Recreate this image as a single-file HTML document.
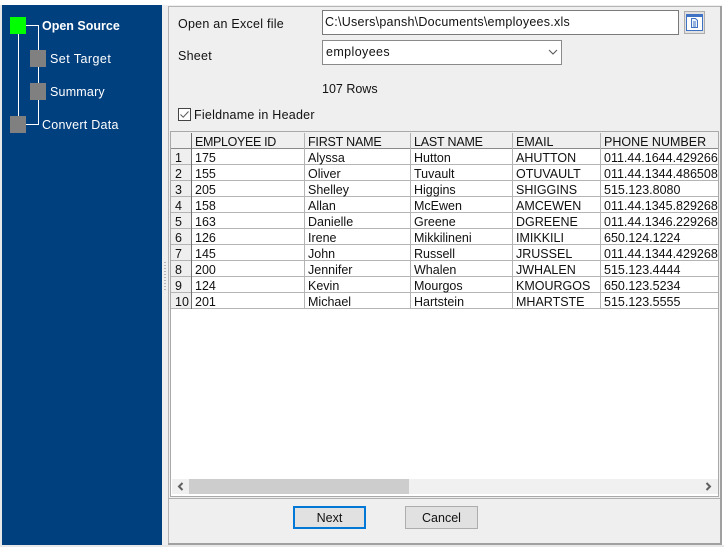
<!DOCTYPE html>
<html><head><meta charset="utf-8">
<style>
html,body{margin:0;padding:0;background:#fff;}
#p{position:relative;width:724px;height:547px;overflow:hidden;background:#fff;font-family:"Liberation Sans","Noto Sans CJK SC",sans-serif;font-size:12.5px;color:#111;}
#p div{position:absolute;box-sizing:border-box;}
.t{white-space:nowrap;line-height:16px;height:16px;}
.w{color:#fff;}
.l{letter-spacing:.25px;}
.sq{background:#808080;width:16px;height:17px;}
.ln{background:#fff;}
.h{background:#b4b4b4;height:1px;}
.v{background:#b4b4b4;width:1px;}
</style></head><body><div id="p">
<div style="left:0;top:545px;width:724px;height:2px;background:#e8e8e8"></div>
<div style="left:0;top:5px;width:2px;height:540px;background:#e8e8e8"></div>
<div style="left:2px;top:5px;width:160px;height:540px;background:#01407f"></div>
<div style="left:162px;top:5px;width:560px;height:540px;background:#efefef"></div>
<div style="left:168px;top:6px;width:554px;height:1px;background:#b5b5b5"></div>
<div style="left:168px;top:6px;width:1px;height:538px;background:#b5b5b5"></div>
<div style="left:720px;top:6px;width:2px;height:538px;background:#a0a0a0"></div>
<div style="left:168px;top:543px;width:554px;height:2px;background:#a0a0a0"></div>
<div style="left:168px;top:498px;width:552px;height:1px;background:#b0b0b0"></div>
<div style="left:164px;top:262px;width:2px;height:30px;background:repeating-linear-gradient(#b5b5b5 0 1px,#efefef 1px 3px)"></div>

<div class="ln" style="left:18px;top:34px;width:1px;height:82px"></div>
<div class="ln" style="left:26px;top:25px;width:13px;height:1px"></div>
<div class="ln" style="left:38px;top:25px;width:1px;height:100px"></div>
<div class="ln" style="left:26px;top:124px;width:13px;height:1px"></div>
<div style="left:10px;top:17px;width:16px;height:17px;background:#00ff00"></div>
<div class="sq" style="left:30px;top:50px"></div>
<div class="sq" style="left:30px;top:83px"></div>
<div class="sq" style="left:10px;top:116px"></div>
<div class="t w" style="left:42px;top:18px;font-weight:bold">Open Source</div>
<div class="t w l" style="left:50px;top:51px;letter-spacing:.45px">Set Target</div>
<div class="t w l" style="left:50px;top:84px;letter-spacing:.2px">Summary</div>
<div class="t w l" style="left:42px;top:117px">Convert Data</div>

<div class="t l" style="left:178px;top:16px">Open an Excel file</div>
<div class="t l" style="left:178px;top:48px">Sheet</div>
<div style="left:322px;top:10px;width:357px;height:25px;background:#fff;border:1px solid #7a7a7a"></div>
<div class="t l" style="left:325px;top:14px">C:\Users\pansh\Documents\employees.xls</div>
<div style="left:684px;top:11px;width:21px;height:23px;background:#e1e1e1;border:1px solid #adadad"></div>
<svg style="position:absolute;left:686px;top:14px" width="17" height="17" viewBox="0 0 17 17">
<rect x=".5" y=".5" width="16" height="16" fill="#fff" stroke="#3f72c4"/><rect x="0" y="0" width="17" height="3" fill="#3f72c4"/>
<path d="M5.500 4.500h4l2 2v7h-6z" fill="#eef4fb" stroke="#3f72c4"/><path d="M7 8h3M7 10h3M7 12h3" stroke="#3f72c4"/></svg>
<div style="left:322px;top:40px;width:240px;height:25px;background:#fff;border:1px solid #8a8a8a"></div>
<div class="t l" style="left:326px;top:44px;letter-spacing:.4px">employees</div>
<svg style="position:absolute;left:548px;top:49px" width="10" height="7" viewBox="0 0 10 7"><path d="M1 1l4 4 4-4" fill="none" stroke="#555"/></svg>
<div class="t" style="left:322px;top:81px">107 Rows</div>
<div style="left:178px;top:108px;width:13px;height:13px;background:#fff;border:1px solid #444"></div>
<svg style="position:absolute;left:179px;top:109px" width="11" height="11" viewBox="0 0 11 11"><path d="M1.500 5.500l2.700 2.700L9.500 2.500" fill="none" stroke="#555"/></svg>
<div class="t l" style="left:194px;top:107px">Fieldname in Header</div>

<div style="left:170px;top:131px;width:549px;height:366px;background:#fff;border:1px solid #a9a9a9"></div>
<div style="left:171px;top:132px;width:547px;height:16px;background:#efefef"></div>
<div style="left:171px;top:149px;width:20px;height:160px;background:#efefef"></div>
<div class="h" style="left:171px;top:148px;width:547px;background:#8a8a8a"></div>
<div class="h" style="left:171px;top:164px;width:547px"></div>
<div class="h" style="left:171px;top:180px;width:547px"></div>
<div class="h" style="left:171px;top:196px;width:547px"></div>
<div class="h" style="left:171px;top:212px;width:547px"></div>
<div class="h" style="left:171px;top:228px;width:547px"></div>
<div class="h" style="left:171px;top:244px;width:547px"></div>
<div class="h" style="left:171px;top:260px;width:547px"></div>
<div class="h" style="left:171px;top:276px;width:547px"></div>
<div class="h" style="left:171px;top:292px;width:547px"></div>
<div class="h" style="left:171px;top:308px;width:547px"></div>
<div class="v" style="left:191px;top:133px;height:176px;background:#707070"></div>
<div class="v" style="left:304px;top:133px;height:176px"></div>
<div class="v" style="left:410px;top:133px;height:176px"></div>
<div class="v" style="left:512px;top:133px;height:176px"></div>
<div class="v" style="left:600px;top:133px;height:176px"></div>

<div class="t" style="left:195px;top:134px;letter-spacing:-.35px">EMPLOYEE ID</div>
<div class="t" style="left:308px;top:134px;letter-spacing:-.2px">FIRST NAME</div>
<div class="t" style="left:414px;top:134px;letter-spacing:-.2px">LAST NAME</div>
<div class="t" style="left:516px;top:134px">EMAIL</div>
<div class="t" style="left:604px;top:134px">PHONE NUMBER</div>

<div class="t" style="left:175px;top:150px">1</div><div class="t" style="left:195px;top:150px">175</div><div class="t" style="left:308px;top:150px">Alyssa</div><div class="t" style="left:414px;top:150px">Hutton</div><div class="t" style="left:516px;top:150px">AHUTTON</div><div class="t" style="left:604px;top:150px;width:114px;overflow:hidden">011.44.1644.429266</div>
<div class="t" style="left:175px;top:166px">2</div><div class="t" style="left:195px;top:166px">155</div><div class="t" style="left:308px;top:166px">Oliver</div><div class="t" style="left:414px;top:166px">Tuvault</div><div class="t" style="left:516px;top:166px">OTUVAULT</div><div class="t" style="left:604px;top:166px;width:114px;overflow:hidden">011.44.1344.486508</div>
<div class="t" style="left:175px;top:182px">3</div><div class="t" style="left:195px;top:182px">205</div><div class="t" style="left:308px;top:182px">Shelley</div><div class="t" style="left:414px;top:182px">Higgins</div><div class="t" style="left:516px;top:182px">SHIGGINS</div><div class="t" style="left:604px;top:182px;width:114px;overflow:hidden">515.123.8080</div>
<div class="t" style="left:175px;top:198px">4</div><div class="t" style="left:195px;top:198px">158</div><div class="t" style="left:308px;top:198px">Allan</div><div class="t" style="left:414px;top:198px">McEwen</div><div class="t" style="left:516px;top:198px">AMCEWEN</div><div class="t" style="left:604px;top:198px;width:114px;overflow:hidden">011.44.1345.829268</div>
<div class="t" style="left:175px;top:214px">5</div><div class="t" style="left:195px;top:214px">163</div><div class="t" style="left:308px;top:214px">Danielle</div><div class="t" style="left:414px;top:214px">Greene</div><div class="t" style="left:516px;top:214px">DGREENE</div><div class="t" style="left:604px;top:214px;width:114px;overflow:hidden">011.44.1346.229268</div>
<div class="t" style="left:175px;top:230px">6</div><div class="t" style="left:195px;top:230px">126</div><div class="t" style="left:308px;top:230px">Irene</div><div class="t" style="left:414px;top:230px">Mikkilineni</div><div class="t" style="left:516px;top:230px">IMIKKILI</div><div class="t" style="left:604px;top:230px;width:114px;overflow:hidden">650.124.1224</div>
<div class="t" style="left:175px;top:246px">7</div><div class="t" style="left:195px;top:246px">145</div><div class="t" style="left:308px;top:246px">John</div><div class="t" style="left:414px;top:246px">Russell</div><div class="t" style="left:516px;top:246px">JRUSSEL</div><div class="t" style="left:604px;top:246px;width:114px;overflow:hidden">011.44.1344.429268</div>
<div class="t" style="left:175px;top:262px">8</div><div class="t" style="left:195px;top:262px">200</div><div class="t" style="left:308px;top:262px">Jennifer</div><div class="t" style="left:414px;top:262px">Whalen</div><div class="t" style="left:516px;top:262px">JWHALEN</div><div class="t" style="left:604px;top:262px;width:114px;overflow:hidden">515.123.4444</div>
<div class="t" style="left:175px;top:278px">9</div><div class="t" style="left:195px;top:278px">124</div><div class="t" style="left:308px;top:278px">Kevin</div><div class="t" style="left:414px;top:278px">Mourgos</div><div class="t" style="left:516px;top:278px">KMOURGOS</div><div class="t" style="left:604px;top:278px;width:114px;overflow:hidden">650.123.5234</div>
<div class="t" style="left:175px;top:294px">10</div><div class="t" style="left:195px;top:294px">201</div><div class="t" style="left:308px;top:294px">Michael</div><div class="t" style="left:414px;top:294px">Hartstein</div><div class="t" style="left:516px;top:294px">MHARTSTE</div><div class="t" style="left:604px;top:294px;width:114px;overflow:hidden">515.123.5555</div>

<div style="left:172px;top:479px;width:546px;height:15px;background:#f0f0f0"></div>
<div style="left:189px;top:479px;width:220px;height:15px;background:#cdcdcd"></div>
<svg style="position:absolute;left:176px;top:482px" width="9" height="9" viewBox="0 0 9 9"><path d="M6.500 1L3 4.500 6.500 8" fill="none" stroke="#606060" stroke-width="2"/></svg>
<svg style="position:absolute;left:704px;top:482px" width="9" height="9" viewBox="0 0 9 9"><path d="M2.500 1L6 4.500 2.500 8" fill="none" stroke="#606060" stroke-width="2"/></svg>

<div style="left:293px;top:506px;width:73px;height:23px;background:#e1e1e1;border:2px solid #0078d7"></div>
<div class="t" style="left:293px;top:510px;width:73px;text-align:center">Next</div>
<div style="left:405px;top:506px;width:73px;height:23px;background:#e1e1e1;border:1px solid #adadad"></div>
<div class="t" style="left:405px;top:510px;width:73px;text-align:center">Cancel</div>
</div></body></html>
